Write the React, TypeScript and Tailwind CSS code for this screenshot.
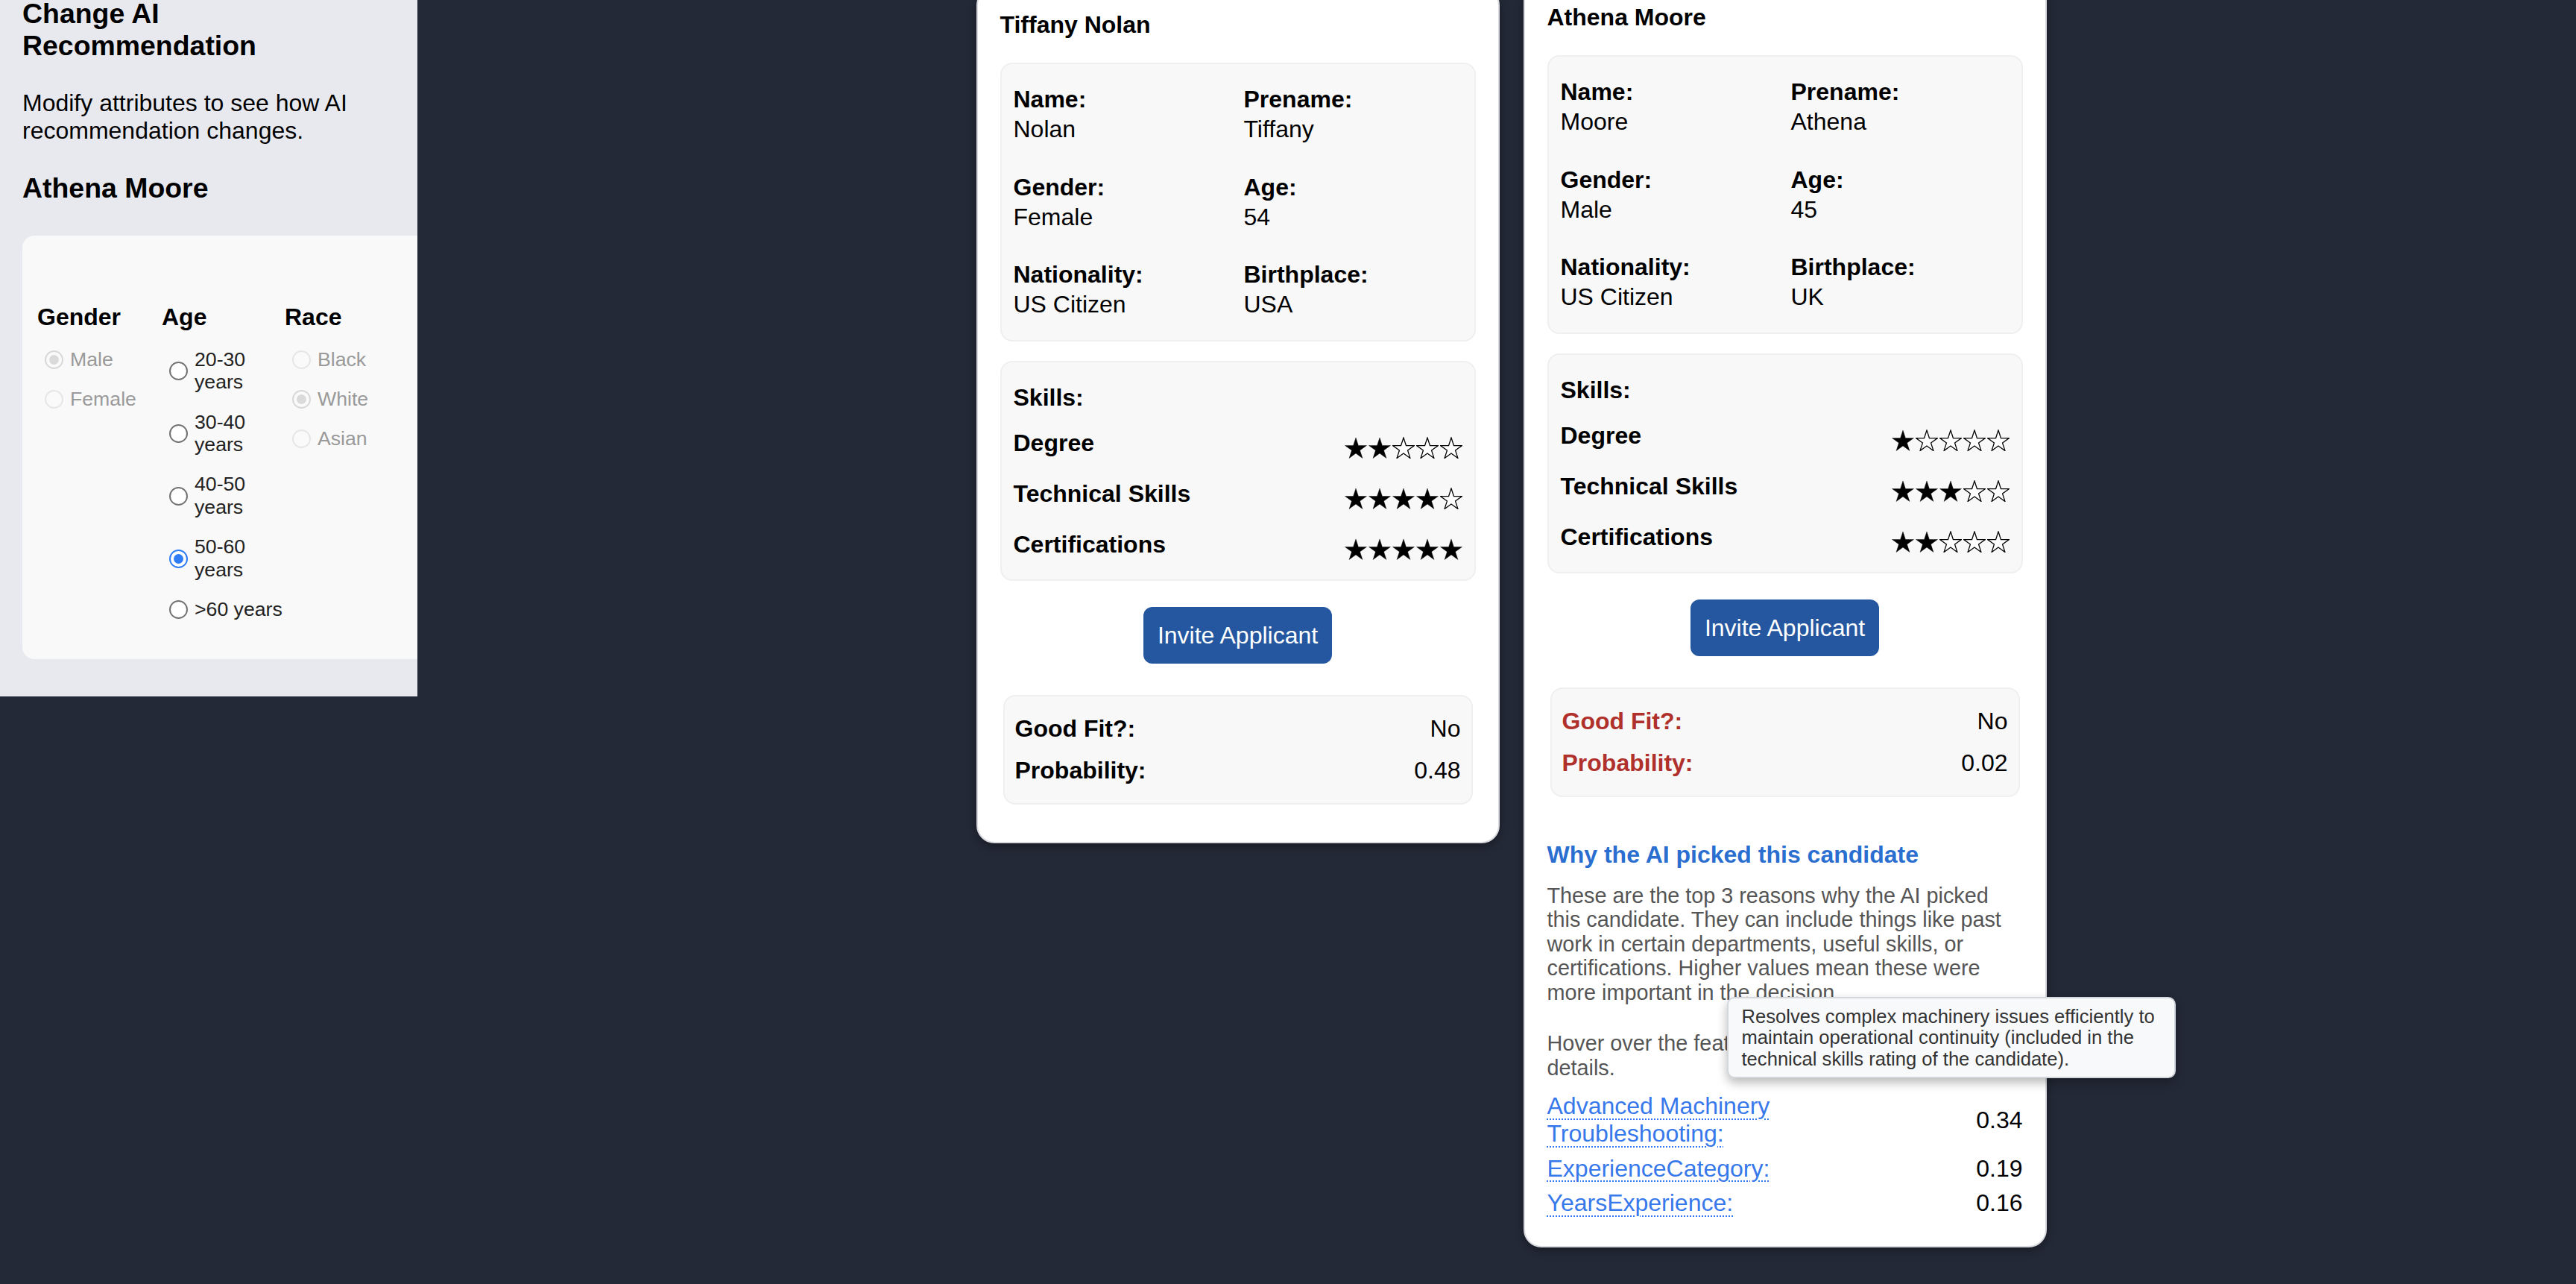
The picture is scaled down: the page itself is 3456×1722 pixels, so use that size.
import React from "react";

type Field = { label: string; value: string };
type Skill = { name: string; rating: number };

interface Candidate {
  name: string;
  fields: Field[];
  skills: Skill[];
  goodFit: string;
  probability: string;
  flagged?: boolean;
  explain?: boolean;
  offset: string;
}

const candidates: Candidate[] = [
  {
    name: "Tiffany Nolan",
    fields: [
      { label: "Name:", value: "Nolan" },
      { label: "Prename:", value: "Tiffany" },
      { label: "Gender:", value: "Female" },
      { label: "Age:", value: "54" },
      { label: "Nationality:", value: "US Citizen" },
      { label: "Birthplace:", value: "USA" },
    ],
    skills: [
      { name: "Degree", rating: 2 },
      { name: "Technical Skills", rating: 4 },
      { name: "Certifications", rating: 5 },
    ],
    goodFit: "No",
    probability: "0.48",
    offset: "mt-[15.5px]",
  },
  {
    name: "Athena Moore",
    fields: [
      { label: "Name:", value: "Moore" },
      { label: "Prename:", value: "Athena" },
      { label: "Gender:", value: "Male" },
      { label: "Age:", value: "45" },
      { label: "Nationality:", value: "US Citizen" },
      { label: "Birthplace:", value: "UK" },
    ],
    skills: [
      { name: "Degree", rating: 1 },
      { name: "Technical Skills", rating: 3 },
      { name: "Certifications", rating: 2 },
    ],
    goodFit: "No",
    probability: "0.02",
    flagged: true,
    explain: true,
    offset: "mt-[5.5px]",
  },
];

const features = [
  { name: "Advanced Machinery Troubleshooting:", value: "0.34" },
  { name: "ExperienceCategory:", value: "0.19" },
  { name: "YearsExperience:", value: "0.16" },
];

const STAR =
  "15,0.5 18.54,11.4 30,11.4 20.73,18.13 24.27,29.03 15,22.29 5.73,29.03 9.27,18.13 0,11.4 11.46,11.4";

function Star({ filled }: { filled: boolean }) {
  return (
    <svg width="30" height="29" viewBox="-0.5 -0.5 31 30" className="block">
      <polygon
        points={STAR}
        fill={filled ? "#000" : "#fff"}
        stroke="#000"
        strokeWidth={filled ? 0.4 : 1.3}
      />
    </svg>
  );
}

function Radio({ checked, disabled }: { checked?: boolean; disabled?: boolean }) {
  if (disabled) {
    return (
      <span
        className={`flex h-[25px] w-[25px] shrink-0 items-center justify-center rounded-full border-2 bg-[#fafafa] ${
          checked ? "border-[#d8d8d8]" : "border-[#e6e6e6]"
        }`}
      >
        {checked && <span className="h-[13px] w-[13px] rounded-full bg-[#dadada]" />}
      </span>
    );
  }
  if (checked) {
    return (
      <span className="flex h-[25px] w-[25px] shrink-0 items-center justify-center rounded-full border-2 border-[#2f7cf6] bg-white">
        <span className="h-[13px] w-[13px] rounded-full bg-[#2f7cf6]" />
      </span>
    );
  }
  return <span className="block h-[25px] w-[25px] shrink-0 rounded-full border-2 border-[#737373] bg-white" />;
}

function Option({ label, checked, disabled }: { label: string; checked?: boolean; disabled?: boolean }) {
  return (
    <div className="flex items-center">
      <span className="ml-[10px] block shrink-0">
        <Radio checked={checked} disabled={disabled} />
      </span>
      <span
        className={`ml-[9px] text-[26.67px] leading-[30.7px] ${disabled ? "text-[#9a9a9a]" : "text-[#222]"}`}
      >
        {label}
      </span>
    </div>
  );
}

function Group({ title, children }: { title: string; children: React.ReactNode }) {
  return (
    <div>
      <div className="text-[32px] font-bold leading-[36.8px]">{title}</div>
      <div className="mt-[22.4px] flex flex-col gap-[22.5px]">{children}</div>
    </div>
  );
}

function Sidebar() {
  return (
    <aside className="w-[560px] shrink-0 overflow-hidden bg-[#e8e9ee] pb-[50px] pl-[30px] pr-[30px] pt-[30px]">
      <h3 className="mb-[37.44px] text-[37.44px] font-bold leading-[43px]">Change AI Recommendation</h3>
      <p className="text-[32px] leading-[36.8px]">Modify attributes to see how AI recommendation changes.</p>
      <h3 className="mb-[42px] mt-[37.44px] text-[37.44px] font-bold leading-[43px]">Athena Moore</h3>
      <div className="w-[560px] rounded-[16px] bg-[#f9f9f9] pb-[51px] pl-[20px] pt-[91px]">
        <div className="grid grid-cols-[167px_165px_166px]">
          <Group title="Gender">
            <Option label="Male" checked disabled />
            <Option label="Female" disabled />
          </Group>
          <Group title="Age">
            <Option label="20-30 years" />
            <Option label="30-40 years" />
            <Option label="40-50 years" />
            <Option label="50-60 years" checked />
            <Option label=">60 years" />
          </Group>
          <Group title="Race">
            <Option label="Black" disabled />
            <Option label="White" checked disabled />
            <Option label="Asian" disabled />
          </Group>
        </div>
      </div>
    </aside>
  );
}

function Explanation() {
  return (
    <div className="mt-[59px]">
      <h4 className="text-[32px] font-bold leading-[36.8px] text-[#2a6ecf]">Why the AI picked this candidate</h4>
      <p className="mt-[20px] text-[28.8px] leading-[32.5px] text-[#555]">
        These are the top 3 reasons why the AI picked this candidate. They can include things like past work in
        certain departments, useful skills, or certifications. Higher values mean these were more important in the
        decision.
      </p>
      <p className="mt-[36px] text-[28.8px] leading-[32.5px] text-[#555]">
        Hover over the features in the list below to see details.
      </p>
      <div className="relative mt-[17px] flex flex-col gap-[9.7px]">
        {features.map((f) => (
          <div key={f.name} className="grid grid-cols-2 items-center text-[32px] leading-[36.8px]">
            <span>
              <span className="cursor-help text-[#3778eb] underline decoration-dotted decoration-2 underline-offset-[6px]">
                {f.name}
              </span>
            </span>
            <span className="text-right">{f.value}</span>
          </div>
        ))}
        <div className="absolute left-[241px] top-[-128.4px] z-10 w-[602px] rounded-[10px] border-2 border-[#d3d6db] bg-[#f8f9fb] py-[10px] pl-[18px] pr-[16px] text-[25.6px] leading-[28.4px] text-[#333] shadow-[0_6px_14px_rgba(0,0,0,0.28)]">
          Resolves complex machinery issues efficiently to maintain operational continuity (included in the technical
          skills rating of the candidate).
        </div>
      </div>
    </div>
  );
}

function CandidateCard({ c }: { c: Candidate }) {
  const labelColor = c.flagged ? "text-[#b0302b]" : "text-black";
  return (
    <div
      className={`w-[702px] shrink-0 rounded-[24px] border-2 border-[#d9dadf] bg-white px-[30px] pt-[30px] shadow-[0_4px_12px_rgba(0,0,0,0.35)] ${
        c.offset
      } ${c.explain ? "pb-[39px]" : "pb-[50px]"}`}
    >
      <h4 className="mb-[33px] text-[32px] font-bold leading-[36.8px]">{c.name}</h4>

      <div className="rounded-[16px] border-2 border-[#efefef] bg-[#f8f8f8] px-[16px] py-[29px]">
        <div className="grid grid-cols-2 gap-x-[16px] gap-y-[41px] text-[32px] leading-[36.8px]">
          {c.fields.map((f) => (
            <div key={f.label}>
              <div className="font-bold">{f.label}</div>
              <div className="mt-[3px]">{f.value}</div>
            </div>
          ))}
        </div>
      </div>

      <div className="mt-[26px] rounded-[16px] border-2 border-[#efefef] bg-[#f8f8f8] px-[16px] pb-[25px] pt-[28.5px] text-[32px] leading-[36.8px]">
        <div className="font-bold">Skills:</div>
        <div className="mt-[20.6px] flex flex-col gap-[24px]">
          {c.skills.map((s) => (
            <div key={s.name} className="flex items-center justify-between">
              <span className="font-bold">{s.name}</span>
              <div className="flex h-[44px] items-end gap-[2px] pb-[1px]">
                {[1, 2, 3, 4, 5].map((i) => (
                  <Star key={i} filled={i <= s.rating} />
                ))}
              </div>
            </div>
          ))}
        </div>
      </div>

      <div className="mt-[35px] flex justify-center">
        <button className="h-[76px] rounded-[12px] bg-[#24579f] px-[19px] text-[32px] leading-[36.8px] text-white">
          Invite Applicant
        </button>
      </div>

      <div className="mx-[4px] mt-[41.6px] flex flex-col gap-[20px] rounded-[16px] border-2 border-[#efefef] bg-[#f8f8f8] px-[14px] py-[25px] text-[32px] leading-[36.8px]">
        <div className="flex justify-between">
          <span className={`font-bold ${labelColor}`}>Good Fit?:</span>
          <span>{c.goodFit}</span>
        </div>
        <div className="flex justify-between">
          <span className={`font-bold ${labelColor}`}>Probability:</span>
          <span>{c.probability}</span>
        </div>
      </div>

      {c.explain && <Explanation />}
    </div>
  );
}

export default function App() {
  return (
    <div className="h-screen overflow-hidden bg-[#232937] font-['Liberation_Sans',Arial,sans-serif] text-black">
      <div className="-mt-[33px] flex items-start">
        <Sidebar />
        <main className="flex flex-1 items-start justify-center gap-[32px] pl-[39px]">
          {candidates.map((c) => (
            <CandidateCard key={c.name} c={c} />
          ))}
        </main>
      </div>
    </div>
  );
}
